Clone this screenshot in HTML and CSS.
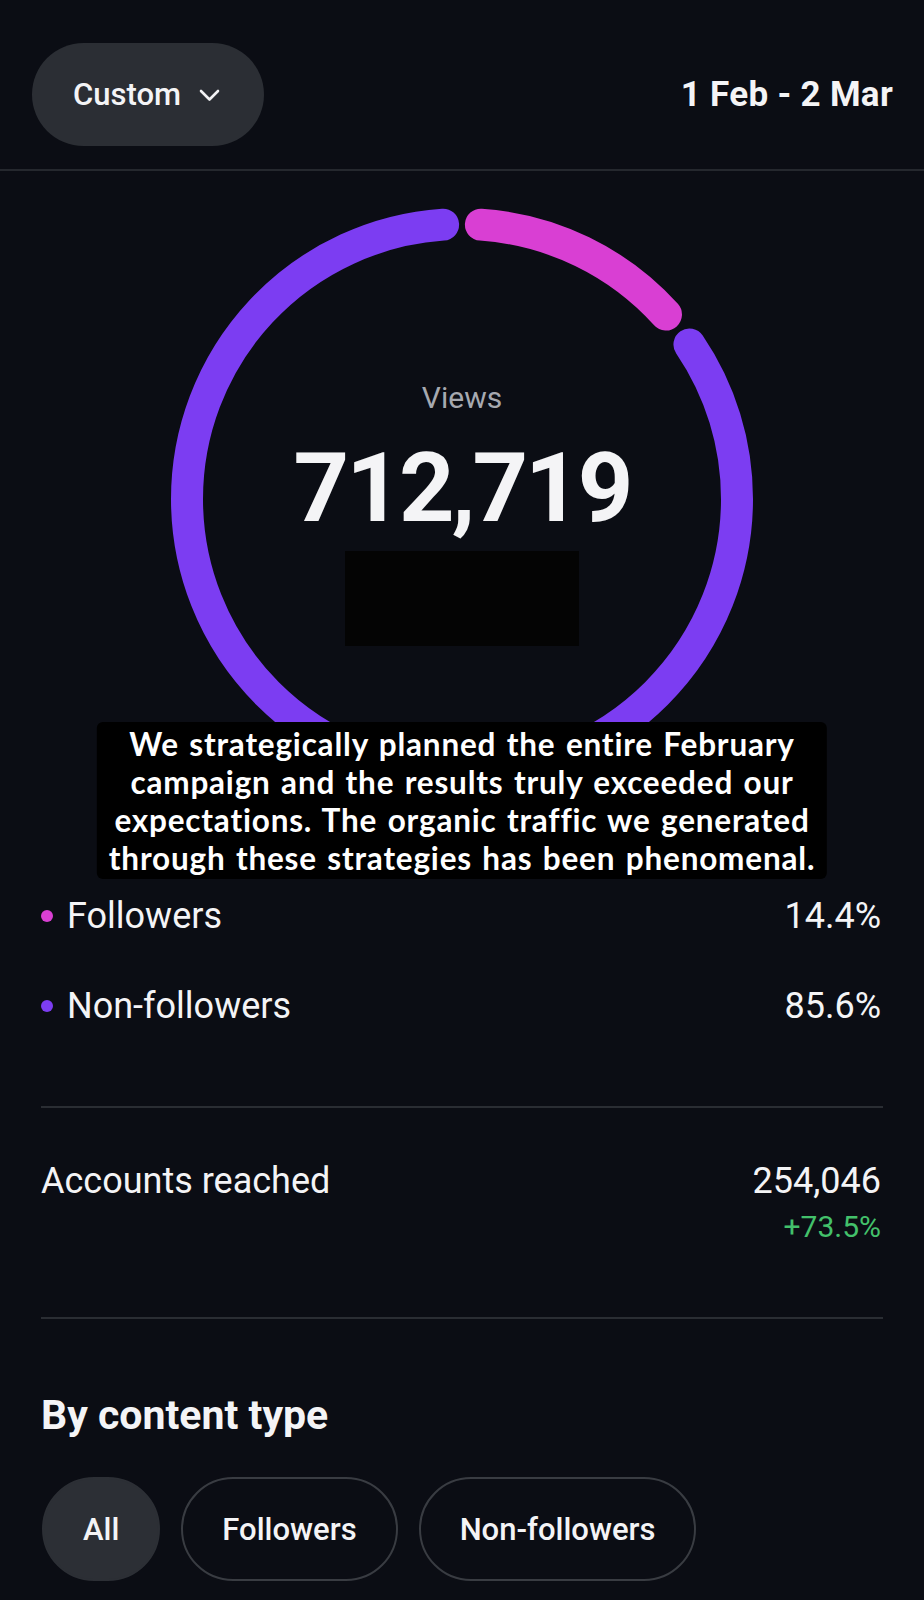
FILE: index.html
```html
<!DOCTYPE html>
<html lang="en">
<head>
    <meta charset="UTF-8">
    <meta name="viewport" content="width=device-width, initial-scale=1.0">
    <title>Views insights</title>
    <link rel="stylesheet" href="styles.css">
</head>
<body>
    <div class="page">
        <div class="top-bar">
            <button class="range-pill">
                Custom
                <svg class="chevron" width="21" height="13" viewBox="0 0 21 13">
                    <path d="M2 2 L10.5 10.5 L19 2" fill="none" stroke="#f2f2f4" stroke-width="2.6" stroke-linecap="round" stroke-linejoin="round"/>
                </svg>
            </button>
            <div class="date-range">1 Feb - 2 Mar</div>
        </div>

        <div class="chart">
            <svg class="ring" width="582" height="582" viewBox="0 0 582 582">
                <circle cx="291" cy="291" r="275" fill="none" stroke="#d93fd3" stroke-width="32" stroke-linecap="round"
                        pathLength="100" stroke-dasharray="12.2 87.8" stroke-dashoffset="-1.1" transform="rotate(-90 291 291)"/>
                <circle cx="291" cy="291" r="275" fill="none" stroke="#7c3df2" stroke-width="32" stroke-linecap="round"
                        pathLength="100" stroke-dasharray="83.4 16.6" stroke-dashoffset="-15.5" transform="rotate(-90 291 291)"/>
            </svg>
            <div class="chart-center">
                <div class="views-label">Views</div>
                <div class="views-total">712,719</div>
                <div class="redacted"></div>
            </div>
        </div>

        <div class="caption">
            We strategically planned the entire February<br>
            campaign and the results truly exceeded our<br>
            expectations. The organic traffic we generated<br>
            through these strategies has been phenomenal.
        </div>

        <div class="legend">
            <div class="legend-row">
                <span class="legend-name"><span class="dot dot-followers"></span>Followers</span>
                <span class="legend-value">14.4%</span>
            </div>
            <div class="legend-row">
                <span class="legend-name"><span class="dot dot-others"></span>Non-followers</span>
                <span class="legend-value">85.6%</span>
            </div>
        </div>

        <div class="rule"></div>

        <div class="stat-row">
            <span class="stat-name">Accounts reached</span>
            <div class="stat-values">
                <span class="stat-value">254,046</span>
                <span class="stat-change">+73.5%</span>
            </div>
        </div>

        <div class="rule rule-second"></div>

        <h2 class="section-title">By content type</h2>
        <div class="chips">
            <button class="chip chip-active">All</button>
            <button class="chip">Followers</button>
            <button class="chip">Non-followers</button>
        </div>
    </div>
</body>
</html>
```

FILE: styles.css
```css
body {
    margin: 0;
    background-color: #0b0d14;
    color: #f4f4f6;
    font-family: Roboto, 'Liberation Sans', sans-serif;
}
.page {
    position: relative;
    width: 924px;
    min-height: 1600px;
    overflow: hidden;
}
.top-bar {
    display: flex;
    justify-content: space-between;
    align-items: center;
    padding: 43px 31px 23px 32px;
    border-bottom: 2px solid #25282e;
}
.range-pill {
    display: flex;
    align-items: center;
    gap: 18px;
    height: 103px;
    padding: 0 44px 0 41px;
    border: none;
    border-radius: 52px;
    background-color: #2b2e34;
    color: #f4f4f6;
    font-family: Roboto, sans-serif;
    font-size: 31px;
    font-weight: 500;
}
.chevron {
    margin-top: 2px;
}
.date-range {
    font-size: 35px;
    font-weight: 700;
    letter-spacing: 0.3px;
}

/* donut */
.chart {
    display: grid;
    justify-content: center;
    margin-top: 37px;
}
.chart > * {
    grid-area: 1 / 1;
}
.chart-center {
    display: flex;
    flex-direction: column;
    align-items: center;
    padding-top: 172px;
}
.views-label {
    font-size: 30px;
    line-height: 36px;
    color: #a6a9b0;
}
.views-total {
    margin-top: 22px;
    font-size: 97px;
    line-height: 100px;
    font-weight: 700;
    letter-spacing: -3px;
}
.redacted {
    width: 234px;
    height: 95px;
    margin-top: 13px;
    background-color: #040404;
}

/* subtitle burned over the chart */
.caption {
    position: absolute;
    top: 722px;
    left: 50%;
    transform: translateX(-50%);
    padding: 3px 12px 2px;
    background-color: #000;
    border-radius: 6px;
    font-family: Lato, 'Open Sans', sans-serif;
    font-size: 31.5px;
    font-weight: 700;
    line-height: 38px;
    letter-spacing: 0.8px;
    word-spacing: 2px;
    text-align: center;
    white-space: nowrap;
    color: #fff;
}

.legend {
    display: flex;
    flex-direction: column;
    gap: 50px;
    padding: 0 43px 0 41px;
    margin-top: 106px;
}
.legend-row {
    display: flex;
    justify-content: space-between;
    align-items: center;
    font-size: 36px;
    line-height: 40px;
}
.legend-name {
    display: flex;
    align-items: center;
    gap: 14px;
}
.dot {
    width: 12px;
    height: 12px;
    border-radius: 50%;
}
.dot-followers {
    background-color: #d93fd3;
}
.dot-others {
    background-color: #7c3df2;
}

.rule {
    height: 2px;
    margin: 80px 41px 0 41px;
    background-color: #2a2d33;
}
.rule-second {
    margin-top: 72px;
}

.stat-row {
    display: flex;
    justify-content: space-between;
    align-items: flex-start;
    padding: 0 43px 0 41px;
    margin-top: 53px;
}
.stat-name {
    font-size: 36px;
    line-height: 40px;
}
.stat-values {
    display: flex;
    flex-direction: column;
    align-items: flex-end;
    gap: 8px;
}
.stat-value {
    font-size: 36px;
    line-height: 40px;
}
.stat-change {
    font-size: 30px;
    line-height: 36px;
    color: #43c16b;
}

.section-title {
    margin: 74px 0 0 41px;
    font-size: 41px;
    line-height: 44px;
    font-weight: 700;
}
.chips {
    display: flex;
    gap: 21px;
    padding-left: 42px;
    margin-top: 40px;
}
.chip {
    height: 104px;
    padding: 0 39px;
    border: 2px solid #393c42;
    border-radius: 52px;
    background-color: transparent;
    color: #f4f4f6;
    font-family: Roboto, sans-serif;
    font-size: 31px;
    font-weight: 500;
}
.chip-active {
    background-color: #2c2f35;
    border-color: #2c2f35;
}
```
